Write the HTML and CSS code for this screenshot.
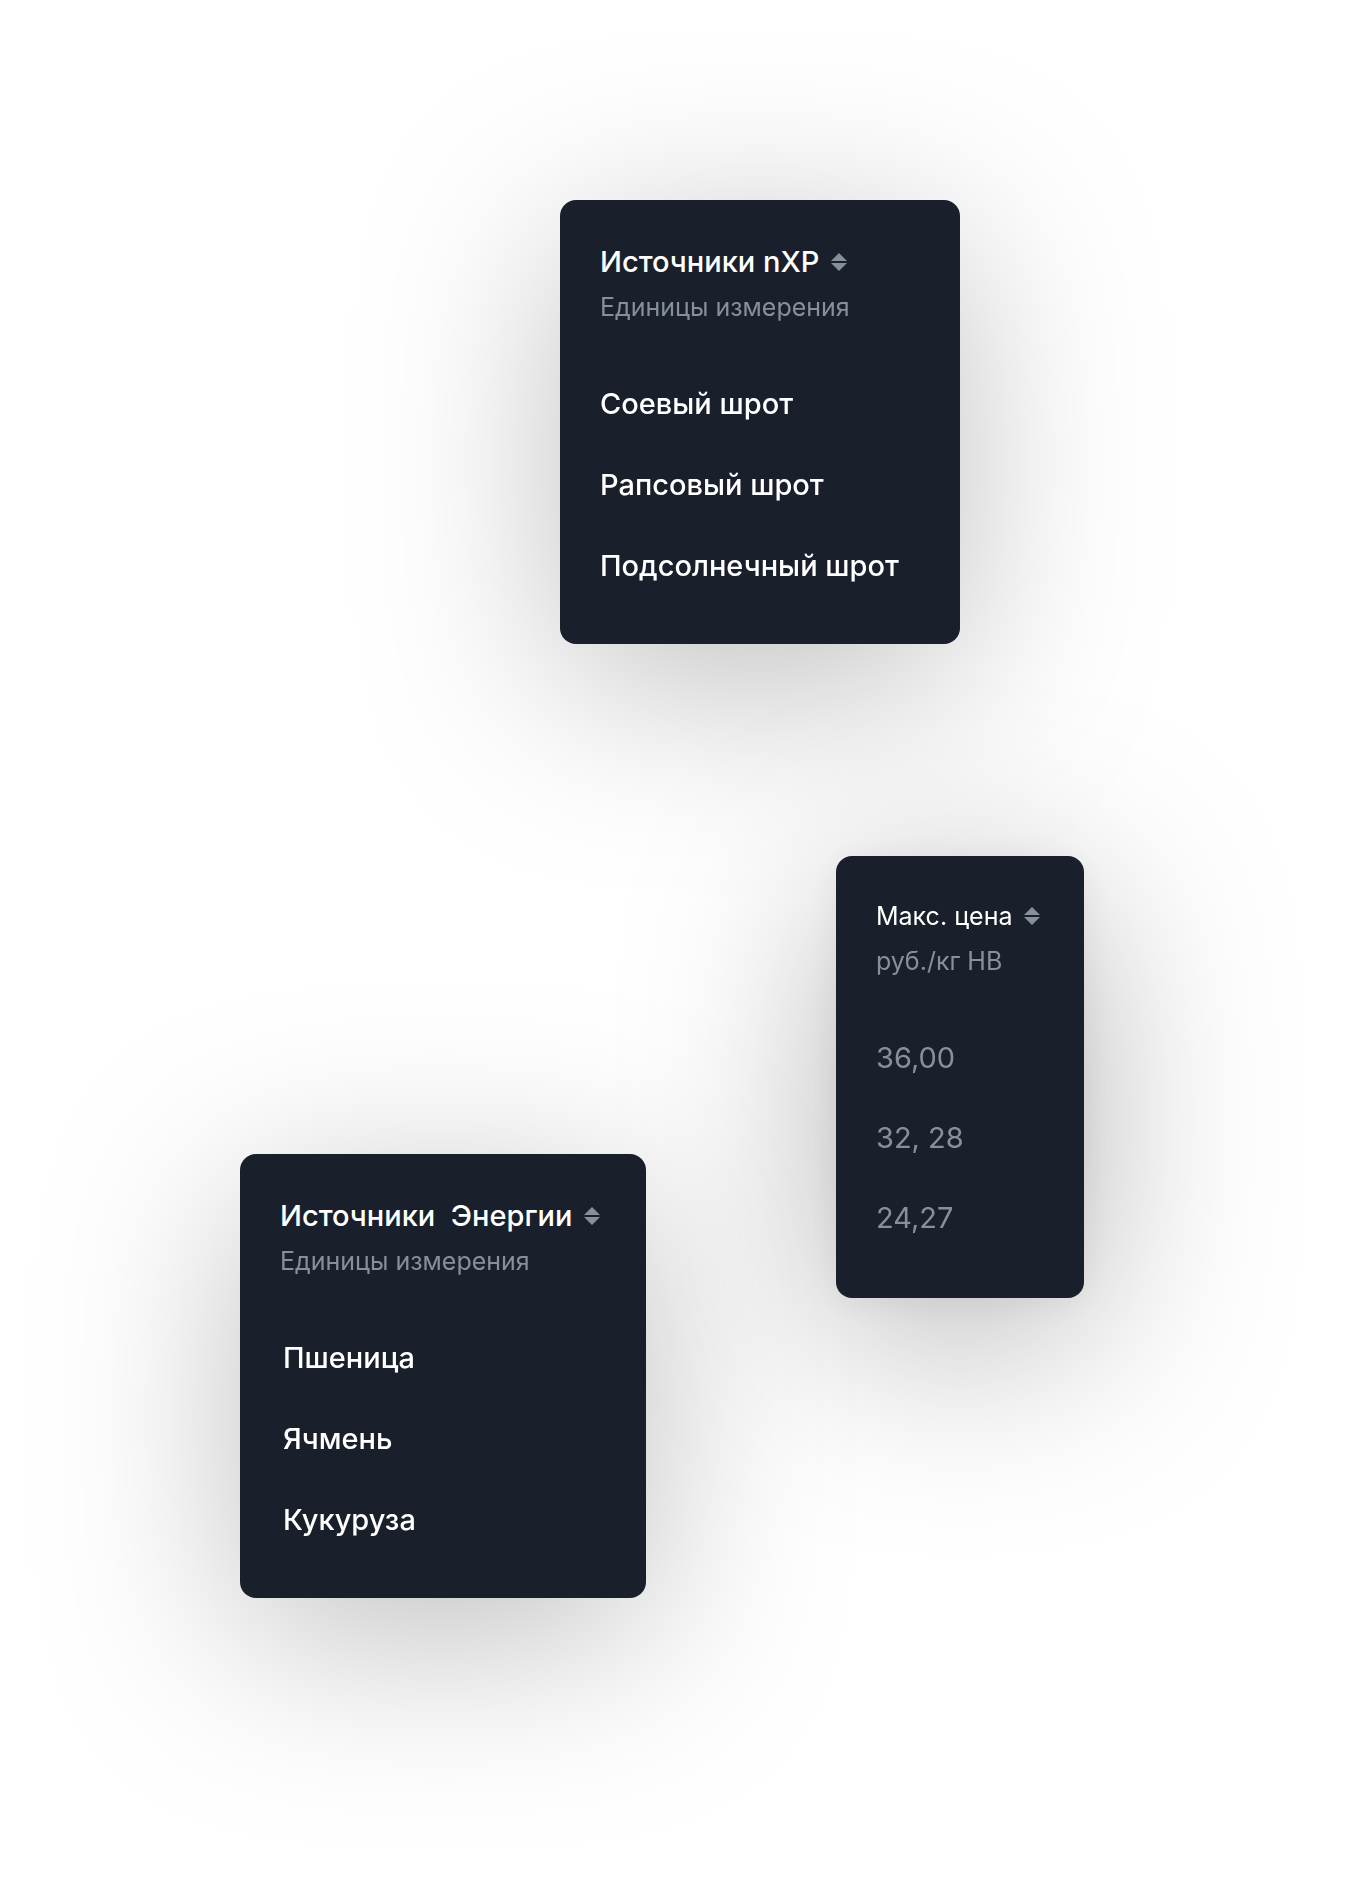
FILE: index.html
```
<!DOCTYPE html>
<html lang="ru">
<head>
  <meta charset="utf-8">
  <meta name="viewport" content="width=device-width, initial-scale=1">
  <title>Источники</title>
  <link rel="stylesheet" href="styles.css">
</head>
<body>
  <main class="board">
    <section class="card card-protein">
      <header class="card-header">
        <div class="card-heading">
          <h2 class="card-title">Источники nXP</h2>
          <button class="sort" type="button" aria-label="Сортировать">
            <svg class="sort-icon" viewBox="0 0 16 18" aria-hidden="true"><path d="M8 0l8 8H0zM0 10h16l-8 8z"/></svg>
          </button>
        </div>
        <p class="card-unit">Единицы измерения</p>
      </header>
      <ul class="card-list">
        <li>Соевый шрот</li>
        <li>Рапсовый шрот</li>
        <li>Подсолнечный шрот</li>
      </ul>
    </section>

    <div class="board-row">
      <section class="card card-energy">
        <header class="card-header">
          <div class="card-heading">
            <h2 class="card-title">Источники  Энергии</h2>
            <button class="sort" type="button" aria-label="Сортировать">
              <svg class="sort-icon" viewBox="0 0 16 18" aria-hidden="true"><path d="M8 0l8 8H0zM0 10h16l-8 8z"/></svg>
            </button>
          </div>
          <p class="card-unit">Единицы измерения</p>
        </header>
        <ul class="card-list">
          <li>Пшеница</li>
          <li>Ячмень</li>
          <li>Кукуруза</li>
        </ul>
      </section>

      <section class="card card-price">
        <header class="card-header">
          <div class="card-heading">
            <h2 class="card-title">Макс. цена</h2>
            <button class="sort" type="button" aria-label="Сортировать">
              <svg class="sort-icon" viewBox="0 0 16 18" aria-hidden="true"><path d="M8 0l8 8H0zM0 10h16l-8 8z"/></svg>
            </button>
          </div>
          <p class="card-unit">руб./кг НВ</p>
        </header>
        <ul class="card-list">
          <li>36,00</li>
          <li>32, 28</li>
          <li>24,27</li>
        </ul>
      </section>
    </div>
  </main>
</body>
</html>
```
FILE: styles.css
```
:root {
  --surface: #1a202b;
  --text: #ffffff;
  --muted: #85909c;
}

* {
  box-sizing: border-box;
}

body {
  margin: 0;
  background: #ffffff;
  color: var(--text);
  font-family: Inter, "Noto Sans", sans-serif;
  overflow-x: hidden;
}

h2,
p,
ul {
  margin: 0;
  padding: 0;
}

.board {
  display: flex;
  flex-direction: column;
  gap: 212px;
  padding: 200px 270px 280px 240px;
}

.board-row {
  display: flex;
  justify-content: space-between;
  align-items: flex-start;
}

.card {
  flex: none;
  padding: 40px 0 58px 40px;
  border-radius: 16px;
  background: var(--surface);
  filter: drop-shadow(0 40px 95px rgba(0, 0, 0, 0.25));
  will-change: filter;
}

.card-protein {
  width: 400px;
  margin-left: 320px;
}

.card-energy {
  width: 406px;
  margin-top: 298px;
}

.card-price {
  width: 248px;
  padding-top: 38px;
  padding-bottom: 60px;
  box-shadow: 0 4px 40px rgba(0, 0, 0, 0.06);
  filter: drop-shadow(0 40px 100px rgba(0, 0, 0, 0.3));
}

.card-header {
  margin-bottom: 54px;
}

.card-heading {
  display: flex;
  align-items: center;
  gap: 12px;
}

.card-title {
  font-size: 29px;
  font-weight: 500;
  line-height: 44px;
  white-space: pre;
}

.card-price .card-title {
  font-size: 25px;
  font-weight: 400;
}

.card-unit {
  color: var(--muted);
  font-size: 25px;
  line-height: 46px;
}

.card-list {
  display: grid;
  gap: 41px;
  list-style: none;
  font-size: 29px;
  font-weight: 500;
  line-height: 40px;
}

.card-energy .card-list {
  padding-left: 3px;
}

.card-price .card-list {
  gap: 40px;
  color: var(--muted);
  font-weight: 400;
}

.sort {
  display: flex;
  padding: 0;
  border: 0;
  background: none;
  color: var(--muted);
  cursor: pointer;
}

.sort-icon {
  width: 16px;
  height: 18px;
  fill: currentColor;
}
```
